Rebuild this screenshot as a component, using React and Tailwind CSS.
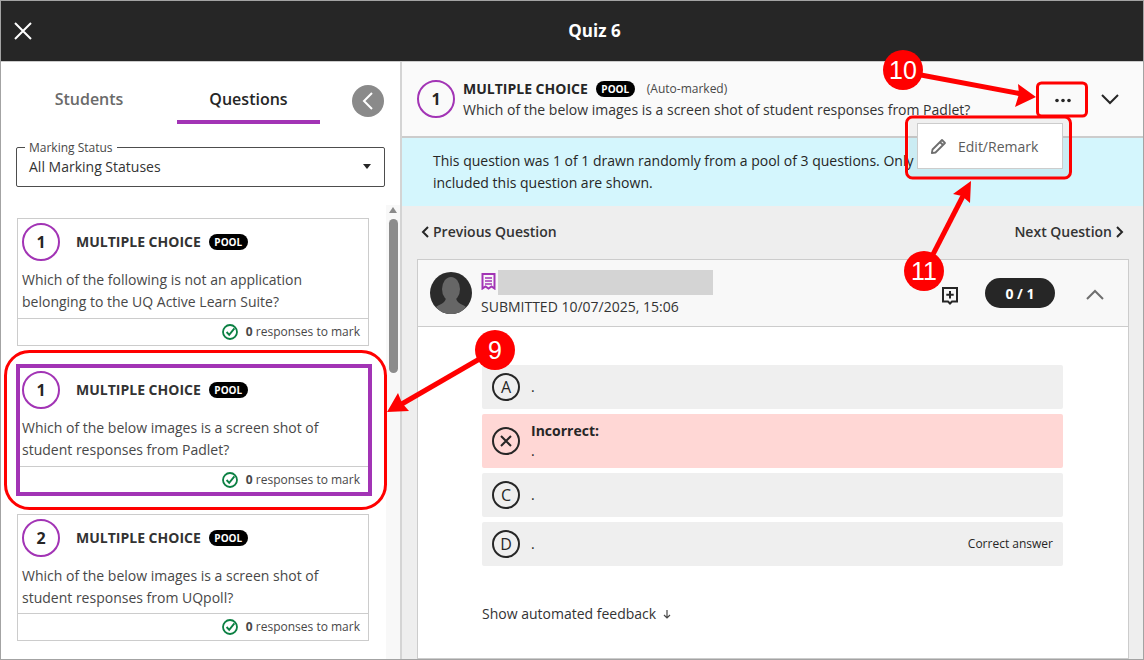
import React from "react";

const font = { fontFamily: '"Open Sans", "Noto Sans", sans-serif' };

function Check() {
  return (
    <svg width="16" height="16" viewBox="0 0 16 16" fill="none" className="shrink-0">
      <circle cx="8" cy="8" r="7" stroke="#0b8043" strokeWidth="1.8" />
      <path d="M4.6 8 L7.2 10.8 L12.4 4.4" stroke="#0b8043" strokeWidth="1.9" fill="none" />
    </svg>
  );
}

function Pool() {
  return (
    <span className="inline-flex items-center justify-center w-[39px] h-[16px] rounded-full bg-black text-white text-[10px] font-bold leading-none">
      POOL
    </span>
  );
}

function NumberCircle({ n }) {
  return (
    <div className="w-[38px] h-[38px] rounded-full border-2 border-[#a234b5] flex items-center justify-center text-[16px] font-bold text-[#262626] shrink-0">
      {n}
    </div>
  );
}

function QuestionCard({ n, lines, selected, short, className = "" }) {
  const box = selected
    ? "bg-white border-4 border-[#a234b5] w-[356px] ml-[15px] h-[132px] flex flex-col "
    : short
    ? "bg-white border border-[#cccccc] w-[352px] ml-[16px] h-[127px] flex flex-col "
    : "bg-white border border-[#cccccc] w-[352px] ml-[16px] h-[128px] flex flex-col ";
  return (
    <div className={box + className}>
      <div className={selected ? "flex items-center pl-[2px] pt-[3px]" : "flex items-center pl-[4px] pt-[4px]"}>
        <NumberCircle n={n} />
        <span className="ml-[16px] text-[14px] font-bold text-[#333333] leading-[20px]">MULTIPLE CHOICE</span>
        <span className="ml-[8px] flex"><Pool /></span>
      </div>
      <div className={selected ? "pl-[2px] mt-[8px] text-[14px] leading-[22px] text-[#484848] h-[49px]" : short ? "pl-[4px] mt-[8px] text-[14px] leading-[22px] text-[#484848] h-[48px]" : "pl-[4px] mt-[8px] text-[14px] leading-[22px] text-[#484848] h-[49px]"}>
        {lines[0]}
        <br />
        {lines[1]}
      </div>
      <div className="flex-1 border-t border-[#cccccc] flex items-center justify-end gap-[8px] pr-[8px]">
        <Check />
        <span className="text-[12px] text-[#484848]">
          <b>0</b> responses to mark
        </span>
      </div>
    </div>
  );
}

function Answer({ letter, children, right, h = "h-[44px]", bg = "bg-[#efefef]" }) {
  return (
    <div className={"flex items-center rounded-[2px] pl-[10px] pr-[10px] " + h + " " + bg}>
      <div className="w-[28px] h-[28px] rounded-full border-2 border-[#262626] flex items-center justify-center text-[16px] text-[#262626] shrink-0">
        {letter}
      </div>
      <div className="ml-[11px] flex-1 text-[14px] text-[#262626] leading-[22px]">{children}</div>
      {right && <span className="text-[12px] text-[#262626]">{right}</span>}
    </div>
  );
}

function Badge({ text, className }) {
  return (
    <div
      className={"absolute w-[40px] h-[40px] rounded-full bg-[#ff0000] text-white flex items-center justify-center text-[25px] leading-none " + className}
      style={{ fontFamily: '"Liberation Sans", sans-serif' }}
    >
      {text}
    </div>
  );
}

export default function App() {
  return (
    <div className="relative w-[1144px] h-[660px] border border-[#a3a3a3] flex flex-col overflow-hidden bg-white text-[#262626]" style={font}>
      <header className="relative h-[60px] shrink-0 bg-[#262626] flex items-center justify-center border-b border-[#262626] pl-[45px]">
        <svg width="20" height="20" viewBox="0 0 20 20" className="absolute left-[12px] top-[20px]" stroke="#fff" strokeWidth="2" fill="none">
          <path d="M2 2 L18 18 M18 2 L2 18" />
        </svg>
        <h1 className="text-[17px] font-bold text-white">Quiz 6</h1>
      </header>

      <div className="flex-1 flex min-h-0 border-t border-[#cccccc]">
        {/* left column */}
        <aside className="w-[399px] shrink-0 flex flex-col">
          <div className="flex h-[62px] pl-[33px]">
            <div className="w-[110px] h-full flex items-end justify-center pb-[14px] text-[16px] font-semibold text-[#6a6a6a] leading-[22px]">Students</div>
            <div className="ml-[33px] w-[143px] h-full flex items-end justify-center pb-[10px] text-[16px] font-semibold text-[#262626] leading-[22px] border-b-4 border-[#a234b5]">Questions</div>
            <button className="ml-[32px] mt-[23px] w-[32px] h-[32px] rounded-full bg-[#8a8a8a] flex items-center justify-center">
              <svg width="12" height="18" viewBox="0 0 12 18" fill="none" stroke="#fff" strokeWidth="2">
                <path d="M10 1 L2 9 L10 17" />
              </svg>
            </button>
          </div>

          <div className="relative mt-[23px] ml-[15px] w-[369px] h-[40px] border border-[#4d4d4d] rounded-[2px] flex items-center justify-between pl-[12px] pr-[13px] pb-[2px] shrink-0">
            <span className="absolute left-[8px] -top-[8px] bg-white px-[4px] text-[12px] leading-[16px] text-[#484848]">Marking Status</span>
            <span className="text-[14px] text-[#333333]">All Marking Statuses</span>
            <svg width="8" height="5" viewBox="0 0 8 5"><path d="M0 0 H8 L4 5 Z" fill="#262626" /></svg>
          </div>

          <div className="flex-1 flex min-h-0 mt-[18px]">
            <div className="w-[385px] shrink-0 pt-[13px]">
              <QuestionCard n={1} lines={["Which of the following is not an application", "belonging to the UQ Active Learn Suite?"]} />
              <QuestionCard selected className="mt-[18px]" n={1} lines={["Which of the below images is a screen shot of", "student responses from Padlet?"]} />
              <QuestionCard short className="mt-[18px]" n={2} lines={["Which of the below images is a screen shot of", "student responses from UQpoll?"]} />
            </div>
            <div className="w-[14px] bg-[#f8f8f8] flex flex-col items-center pt-[2px]">
              <svg width="8" height="6" viewBox="0 0 8 6"><path d="M4 0 L8 6 H0 Z" fill="#8a8a8a" /></svg>
              <div className="mt-[6px] w-[9px] h-[154px] rounded-full bg-[#8c8c8c]" />
            </div>
          </div>
        </aside>

        {/* right column */}
        <main className="flex-1 min-w-0 flex flex-col border-l-2 border-[#d4d4d4] bg-[#eeeeee]">
          <div className="h-[76px] shrink-0 bg-[#fafafa] border-b-2 border-[#cccccc] flex items-center pl-[15px] pr-[24px]">
            <NumberCircle n={1} />
            <div className="ml-[8px] flex-1 pt-[1px]">
              <div className="flex items-center h-[20px]">
                <span className="text-[14px] font-bold text-[#262626]">MULTIPLE CHOICE</span>
                <span className="ml-[8px] flex"><Pool /></span>
                <span className="ml-[12px] text-[12px] text-[#484848]">(Auto-marked)</span>
              </div>
              <div className="text-[14px] leading-[22px] text-[#333333]">Which of the below images is a screen shot of student responses from Padlet?</div>
            </div>
            <svg width="16" height="5" viewBox="0 0 16 5" fill="#262626" className="mr-[30px] mt-[2px]">
              <circle cx="2" cy="2.5" r="1.8" /><circle cx="8" cy="2.5" r="1.8" /><circle cx="14" cy="2.5" r="1.8" />
            </svg>
            <svg width="18" height="11" viewBox="0 0 18 11" fill="none" stroke="#262626" strokeWidth="2" className="mt-[1px]">
              <path d="M1 1 L9 9 L17 1" />
            </svg>
          </div>

          <div className="h-[68px] shrink-0 bg-[#d4f6fd] pl-[31px] pt-[12px] text-[14px] leading-[22px] text-[#262626]">
            This question was 1 of 1 drawn randomly from a pool of 3 questions. Only
            <br />
            included this question are shown.
          </div>

          <nav className="h-[53px] shrink-0 flex items-center justify-between pl-[19px] pr-[19px] pb-[2px]">
            <span className="flex items-center gap-[4px] text-[14px] font-semibold text-[#333333]">
              <svg width="8" height="12" viewBox="0 0 8 12" fill="none" stroke="#262626" strokeWidth="2"><path d="M7 1 L2 6 L7 11" /></svg>
              Previous Question
            </span>
            <span className="flex items-center gap-[4px] text-[14px] font-semibold text-[#333333]">
              Next Question
              <svg width="8" height="12" viewBox="0 0 8 12" fill="none" stroke="#262626" strokeWidth="2"><path d="M1 1 L6 6 L1 11" /></svg>
            </span>
          </nav>

          <section className="ml-[15px] w-[712px] flex-1 min-h-0 border border-[#cccccc] bg-white">
            <div className="h-[67px] bg-[#f8f8f8] border-b border-[#cccccc] flex pl-[12px] pr-[24px] items-center">
              <svg width="42" height="42" viewBox="0 0 42 42" className="shrink-0">
                <circle cx="21" cy="21" r="21" fill="#2b2b2b" />
                <ellipse cx="21" cy="17" rx="9" ry="12" fill="#666" />
                <path d="M16 26 C15 32 9 32 6 35 C10 40 15 42 21 42 C27 42 32 40 36 35 C33 32 27 32 26 26 Z" fill="#666" />
              </svg>
              <div className="ml-[9px] w-[240px]">
                <div className="flex items-start h-[27px]">
                  <svg width="15" height="17" viewBox="0 0 15 17" className="mt-[3px] shrink-0" fill="none" stroke="#a234b5" strokeWidth="2">
                    <path d="M1.5 1 H13.5 V15.5 L10.5 13.5 L7.5 15.5 L4.5 13.5 L1.5 15.5 Z" />
                    <path d="M4 5 H11 M4 8 H11 M4 11 H11" strokeWidth="1.4" />
                  </svg>
                  <div className="ml-[2px] w-[215px] h-[25px] bg-[#d4d4d4] shrink-0" />
                </div>
                <div className="text-[14px] leading-[20px] text-[#333333] whitespace-nowrap">SUBMITTED 10/07/2025, 15:06</div>
              </div>
              <svg width="16" height="18" viewBox="0 0 16 18" className="ml-[222px] mt-[6px] shrink-0" fill="none" stroke="#262626" strokeWidth="2">
                <path d="M1 1 H15 V14.5 H10 L8 16.5 L6 14.5 H1 Z" />
                <path d="M8 4 V11.5 M4.3 7.8 H11.7" />
              </svg>
              <div className="ml-[27px] w-[70px] h-[30px] rounded-full bg-[#262626] text-white text-[14px] font-bold flex items-center justify-center shrink-0">0 / 1</div>
              <svg width="18" height="11" viewBox="0 0 18 11" fill="none" stroke="#6e6e6e" strokeWidth="2" className="ml-[31px] mt-[3px] shrink-0">
                <path d="M1 10 L9 2 L17 10" />
              </svg>
            </div>

            <div className="pl-[64px] pt-[38px] w-[645px]">
              <div className="flex flex-col gap-[5px]">
                <Answer letter="A">.</Answer>
                <Answer
                  h="h-[54px]"
                  bg="bg-[#ffd7d5]"
                  letter={
                    <svg width="12" height="12" viewBox="0 0 12 12" stroke="#262626" strokeWidth="2"><path d="M1 1 L11 11 M11 1 L1 11" /></svg>
                  }
                >
                  <b className="block leading-[20px]">Incorrect:</b>
                  <span className="block leading-[20px]">.</span>
                </Answer>
                <Answer letter="C">.</Answer>
                <Answer letter="D" right="Correct answer">.</Answer>
              </div>
              <div className="mt-[37px] flex items-center gap-[6px] text-[14px] leading-[22px] text-[#333333]">
                Show automated feedback
                <svg width="10" height="10" viewBox="0 0 10 10" fill="none" stroke="#484848" strokeWidth="1.2"><path d="M5 1 V9 M2 6 L5 9 L8 6" /></svg>
              </div>
            </div>
          </section>
        </main>
      </div>

      {/* dropdown menu */}
      <div className="absolute left-[916px] top-[122px] w-[146px] h-[46px] bg-white border border-[#cccccc] shadow-[0_0_0_8px_rgba(0,0,0,0.04)] flex items-center pl-[12px] gap-[11px] text-[14px] text-[#5c5c5c]">
        <svg width="17" height="17" viewBox="0 0 17 17" fill="none" stroke="#6e6e6e" strokeWidth="1.8" strokeLinejoin="round">
          <path d="M12 2 L15 5 L5.5 14.5 L1.8 15.2 L2.5 11.5 Z M10 4 L13 7" />
        </svg>
        Edit/Remark
      </div>

      {/* annotations */}
      <svg className="absolute left-[-1px] top-[-1px] pointer-events-none" width="1144" height="660" fill="none">
        <rect x="5.5" y="351.5" width="380" height="157" rx="24" stroke="#ff0000" strokeWidth="3" />
        <rect x="1037.5" y="83" width="49" height="33" rx="4" stroke="#ff0000" strokeWidth="3" />
        <rect x="906.5" y="117" width="164" height="61" rx="6" stroke="#ff0000" strokeWidth="3" />
        <path d="M905 72 L1022 94" stroke="#ff0000" strokeWidth="5" />
        <path d="M1036 97 L1018 84 L1019 94 L1015 107 Z" fill="#ff0000" />
        <path d="M925 270 L964 194" stroke="#ff0000" strokeWidth="5" />
        <path d="M971 181 L953 194 L962 196 L970 203 Z" fill="#ff0000" />
        <path d="M495 350 L400 405" stroke="#ff0000" strokeWidth="5" />
        <path d="M387 412 L409 411 L402 403 L398 393 Z" fill="#ff0000" />
      </svg>
      <Badge text="10" className="left-[882px] top-[49px]" />
      <Badge text="11" className="left-[903px] top-[250px]" />
      <Badge text="9" className="left-[474px] top-[329px]" />
    </div>
  );
}
